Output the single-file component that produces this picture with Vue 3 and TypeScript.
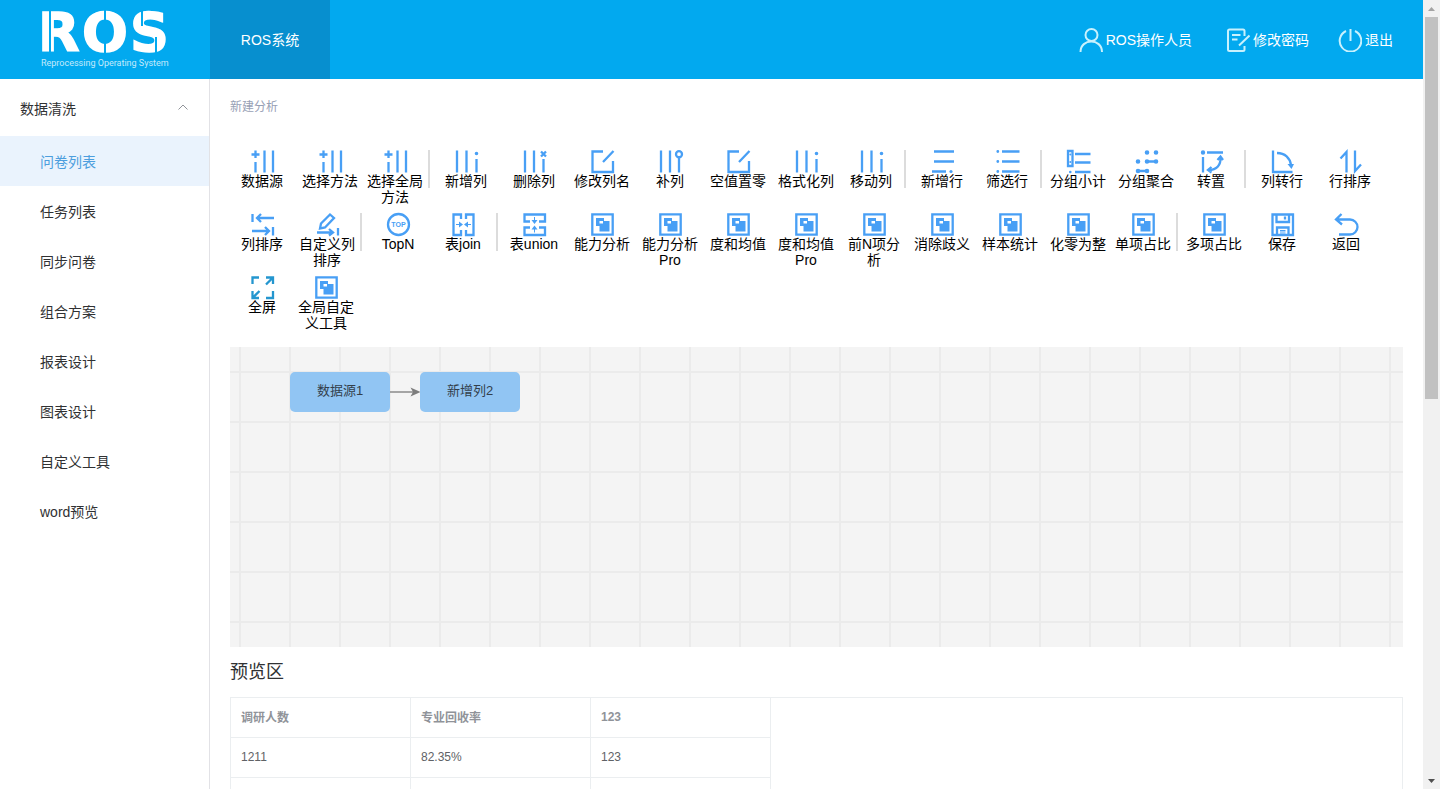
<script setup lang="ts">
interface Glyph {
  stroke?: string
  fill?: string
  knockout?: string
  text?: string
}

interface Tool {
  label: string
  icon: string
  end?: boolean
  last?: boolean
}

const dot = (x: number, y: number, r = 1.8): string =>
  `M${x - r} ${y}a${r} ${r} 0 1 0 ${2 * r} 0a${r} ${r} 0 1 0 ${-2 * r} 0z`

const glyphs: Record<string, Glyph> = {
  source: { stroke: 'M4.5 .5v7.500M.5 4.500h8M4.500 12v10.500M13.500 .5v22M22 .5v22' },
  columns: { stroke: 'M2 .5v22M11.500 .5v22M21.500 9v13.500', fill: dot(21.5, 3.5) },
  removeColumn: { stroke: 'M2 .5v22M11 .5v22M20.500 9v13.500M18 1.500l5 5M23 1.500l-5 5' },
  edit: { stroke: 'M12 1.500H1.500v20.500h20.500V11M22.500 1L12 12' },
  fillColumn: { stroke: 'M2 .5v22M11 .5v22M20 8v14.500M17 4.200a3 3 0 1 0 6 0a3 3 0 1 0 -6 0z' },
  addRow: { stroke: 'M3 1.500h20M3 11.500h20M1 21.500h14', fill: dot(20, 21.5, 1.6) },
  filterRow: { stroke: 'M6 1.500h17.500M6 11.500h17.500M6 21.500h17.500', fill: dot(1.8, 1.5, 1.4) + dot(1.8, 11.5, 1.4) + dot(1.8, 21.5, 1.4) },
  subtotal: { stroke: 'M1 1h4.500v15h-4.500zM8 4h15.500M8 12.500h15.500M8 22h15.500', fill: dot(3.3, 4.5, 1) + dot(3.3, 12, 1) + dot(3.3, 22, 1.3) },
  aggregate: { stroke: 'M12 11.500h9M3 21h9', fill: dot(12, 2.5, 2.3) + dot(21, 2.5, 2.3) + dot(3, 11.5, 2.3) + dot(12, 11.5, 2.3) + dot(21, 11.5, 2.3) + dot(3, 21, 2.3) + dot(12, 21, 2.3) },
  transpose: { stroke: 'M7 2.500h16M3 7v15.500M20.500 7C21 15 17 20 8.500 20M17.500 10l3-3.500l2.500 3.500M11.500 17l-3.500 3l3.500 2.500', fill: dot(3, 2.5, 2.2) },
  toRow: { stroke: 'M2 .5v21.500h19.500M6 3C14 3 19 8 20 15', fill: 'M16.500 14h6.500l-2.500 5z' },
  sortRow: { stroke: 'M7.500 22.500V2L1.500 8.500M16 .5v20.500l6-6.500' },
  sortColumn: { stroke: 'M1.500 1v8M6 5h17M10 1L6 5l4 4M22 14v8.500M1 18h17M14 14l4 4l-4 4' },
  customSort: { stroke: 'M5 10.500L14 1.500l4 3.500L9 14.500l-5 1zM1 19.500h16M13 16l4 3.500l-4 3M22 15v7.500' },
  top: { stroke: 'M1 11.500a10.500 10.500 0 1 0 21 0a10.500 10.500 0 1 0 -21 0z', text: 'TOP' },
  join: { stroke: 'M9 6V1.500H1.500v20.500H9V17M14 6V1.500h7.500v20.500H14V17', fill: 'M4 11h3V8.500l4 3l-4 3V12H4zM19 11h-3V8.500l-4 3l4 3V12h3z' },
  union: { stroke: 'M7 8.500H1.500V1.500h20.500v7H16M7 14.500H1.500v7.500h20.500v-7.500H16', fill: 'M11 4h1v3h2.500l-3 4l-3-4H11zM11 19.500h1v-3h2.500l-3-4l-3 4H11z' },
  tool: { stroke: 'M1.300 1.300h20.400v20.400h-20.400z', fill: 'M5 5h8v3h5.500v10.500h-10v-5.500H5z', knockout: 'M8.500 8h3.500v2.500h-3.500z' },
  save: { stroke: 'M1.500 1.500h20.500v20.500h-20.500zM5.500 2v7h12.500V2M6 22v-7.500h11.500V22M14 3.500v3', fill: 'M9 17h5.500v1.500H9zM9 19.500h5.500v1H9z' },
  back: { stroke: 'M6.500 1L1 6.500l6 5M1.500 6.500h13.500a7.500 7.500 0 0 1 0 15H4' },
  full: { stroke: 'M1.500 8V1.500H8M15 1.500h7v6.500M22 1.500L15 8.500M22 15v7h-7M8 22H1.500V15M1.500 22L8.500 15' },
}

const tools: Tool[] = [
  { label: '数据源', icon: 'source' },
  { label: '选择方法', icon: 'source' },
  { label: '选择全局方法', icon: 'source', end: true },
  { label: '新增列', icon: 'columns' },
  { label: '删除列', icon: 'removeColumn' },
  { label: '修改列名', icon: 'edit' },
  { label: '补列', icon: 'fillColumn' },
  { label: '空值置零', icon: 'edit' },
  { label: '格式化列', icon: 'columns' },
  { label: '移动列', icon: 'columns', end: true },
  { label: '新增行', icon: 'addRow' },
  { label: '筛选行', icon: 'filterRow', end: true },
  { label: '分组小计', icon: 'subtotal' },
  { label: '分组聚合', icon: 'aggregate' },
  { label: '转置', icon: 'transpose', end: true },
  { label: '列转行', icon: 'toRow' },
  { label: '行排序', icon: 'sortRow' },
  { label: '列排序', icon: 'sortColumn' },
  { label: '自定义列排序', icon: 'customSort', end: true },
  { label: 'TopN', icon: 'top' },
  { label: '表join', icon: 'join', end: true },
  { label: '表union', icon: 'union' },
  { label: '能力分析', icon: 'tool' },
  { label: '能力分析Pro', icon: 'tool' },
  { label: '度和均值', icon: 'tool' },
  { label: '度和均值Pro', icon: 'tool' },
  { label: '前N项分析', icon: 'tool' },
  { label: '消除歧义', icon: 'tool' },
  { label: '样本统计', icon: 'tool' },
  { label: '化零为整', icon: 'tool' },
  { label: '单项占比', icon: 'tool', end: true },
  { label: '多项占比', icon: 'tool' },
  { label: '保存', icon: 'save' },
  { label: '返回', icon: 'back', last: true },
  { label: '全屏', icon: 'full' },
  { label: '全局自定义工具', icon: 'tool', last: true },
]

const menu: string[] = ['问卷列表', '任务列表', '同步问卷', '组合方案', '报表设计', '图表设计', '自定义工具', 'word预览']

const columns: string[] = ['调研人数', '专业回收率', '123']
const rows: string[][] = [
  ['1211', '82.35%', '123'],
  ['', '', ''],
]
</script>

<template>
  <div class="window">
    <div class="page">
      <header class="topbar">
        <a class="brand" href="#">
          <svg width="210" height="79" viewBox="0 0 210 79" role="img" aria-label="ROS Reprocessing Operating System">
            <text class="brand-name" x="38 82 130" y="51">ROS</text>
            <path class="brand-cut" d="M50 10v44M105 10v14M105 39v15M142 10v16M156 37v17" />
            <text class="brand-sub" x="41" y="66">Reprocessing Operating System</text>
          </svg>
        </a>
        <nav class="systems"><a class="system" href="#">ROS系统</a></nav>
        <div class="actions">
          <button class="action account" type="button">
            <svg width="24" height="24" viewBox="0 0 24 24"><circle cx="12.500" cy="7" r="6" /><path d="M1.500 24c0-14 21.500-14 21.500 0" /></svg>
            <span>ROS操作人员</span>
          </button>
          <button class="action" type="button">
            <svg width="24" height="24" viewBox="0 0 24 24"><path d="M18.500 8V3q0-1.500-1.500-1.500H3.500Q2 1.500 2 3v18.500Q2 23 3.500 23H17q1.500 0 1.500-1.500V18M6 7h8.500M6 11.500h5.500M23.500 7.500L13 17.500" /></svg>
            <span>修改密码</span>
          </button>
          <button class="action" type="button">
            <svg width="24" height="24" viewBox="0 0 24 24"><path d="M12.500 1v12M8 3a10.800 10.800 0 1 0 9 0" /></svg>
            <span>退出</span>
          </button>
        </div>
      </header>

      <div class="body">
        <aside class="sidebar">
          <button class="group" type="button">
            <span>数据清洗</span>
            <svg width="12" height="12" viewBox="0 0 12 12"><path d="M1.500 7.500L6 3l4.500 4.500" /></svg>
          </button>
          <a v-for="(item, i) in menu" :key="item" href="#" class="entry" :class="{ active: i === 0 }">{{ item }}</a>
        </aside>

        <main class="content">
          <div class="crumb">新建分析</div>

          <div class="toolbar">
            <button v-for="tool in tools" :key="tool.label" type="button" class="tool" :class="{ end: tool.end, last: tool.last, deep: tool.icon === 'full' }">
              <svg width="23" height="23" viewBox="0 0 23 23">
                <path v-if="glyphs[tool.icon].stroke" class="line" :d="glyphs[tool.icon].stroke" />
                <path v-if="glyphs[tool.icon].fill" class="solid" :d="glyphs[tool.icon].fill" />
                <path v-if="glyphs[tool.icon].knockout" class="hole" :d="glyphs[tool.icon].knockout" />
                <text v-if="glyphs[tool.icon].text" class="badge" x="11.500" y="14">{{ glyphs[tool.icon].text }}</text>
              </svg>
              <span class="label">{{ tool.label }}</span>
            </button>
          </div>

          <section class="canvas">
            <div class="node first">数据源1</div>
            <svg class="edge" width="30" height="12" viewBox="0 0 30 12"><path class="shaft" d="M0 6h24" /><path class="head" d="M20.500 1.500L30.500 6l-10 4.500l2.500-4.500z" /></svg>
            <div class="node second">新增列2</div>
          </section>

          <h2 class="heading">预览区</h2>
          <div class="preview">
            <table>
              <thead>
                <tr><th v-for="c in columns" :key="c" scope="col">{{ c }}</th></tr>
              </thead>
              <tbody>
                <tr v-for="(r, i) in rows" :key="i"><td v-for="(v, j) in r" :key="j">{{ v }}</td></tr>
              </tbody>
            </table>
          </div>
        </main>
      </div>
    </div>

    <div class="scrollbar">
      <svg width="17" height="17" viewBox="0 0 17 17"><path class="faint" d="M5 11l3.500-4l3.500 4z" /></svg>
      <div class="track"><div class="thumb"></div></div>
      <svg width="17" height="17" viewBox="0 0 17 17"><path class="dark" d="M5 7l3.500 4l3.500-4z" /></svg>
    </div>
  </div>
</template>

<style>
body {
  margin: 0;
  overflow: hidden;
}
</style>

<style scoped>
.window {
  display: flex;
  height: 100vh;
  overflow: hidden;
  font-family: "Liberation Sans", "Noto Sans CJK SC", sans-serif;
  font-size: 14px;
  color: #303133;
  background: #fff;
}
button {
  margin: 0;
  padding: 0;
  border: 0;
  background: none;
  font: inherit;
  color: inherit;
  cursor: pointer;
}
a {
  color: inherit;
  text-decoration: none;
}
.page {
  flex: 1;
  min-width: 0;
  display: flex;
  flex-direction: column;
}
.topbar {
  flex: none;
  display: flex;
  height: 79px;
  background: #02a9ef;
  color: #fff;
}
.brand {
  width: 210px;
}
.brand svg {
  display: block;
}
.brand-name {
  font-family: "DejaVu Sans", sans-serif;
  font-size: 54px;
  font-weight: 700;
  fill: #fff;
  stroke: #fff;
  stroke-width: 1.5;
}
.brand-cut {
  stroke: #02a9ef;
  stroke-width: 2;
}
.brand-sub {
  font-family: "Roboto", "Liberation Sans", sans-serif;
  font-size: 9px;
  fill: #c4eafb;
}
.systems {
  display: flex;
}
.system {
  display: flex;
  align-items: center;
  justify-content: center;
  width: 120px;
  box-sizing: border-box;
  padding-bottom: 1px;
  background: #078fcf;
}
.actions {
  display: flex;
  align-items: center;
  gap: 29px;
  margin-left: auto;
  padding: 0 30px 0 0;
}
.action {
  display: flex;
  align-items: center;
  gap: 3px;
}
.account {
  padding-right: 5px;
}
.action span {
  padding-bottom: 1px;
}
.action svg {
  fill: none;
  stroke: #c8f1fd;
  stroke-width: 2;
}
.body {
  flex: 1;
  min-height: 0;
  display: flex;
}
.sidebar {
  box-sizing: border-box;
  width: 210px;
  flex: none;
  border-right: 1px solid #e2e2e6;
}
.group {
  display: flex;
  align-items: center;
  justify-content: space-between;
  width: 100%;
  height: 57px;
  padding: 0 20px;
}
.group svg {
  fill: none;
  stroke: #909399;
}
.entry {
  display: flex;
  align-items: center;
  height: 50px;
  padding-left: 40px;
}
.entry.active {
  background: #eaf3fd;
  color: #4c9ede;
}
.content {
  flex: 1;
  min-width: 0;
  display: flex;
  flex-direction: column;
  padding: 19px 20px 0;
}
.crumb {
  font-size: 12px;
  line-height: 18px;
  color: #97a0b5;
}
.toolbar {
  display: flex;
  flex-wrap: wrap;
  row-gap: 8px;
  margin: 34px -2px 16px;
  color: #000;
}
.tool {
  box-sizing: border-box;
  display: flex;
  flex-direction: column;
  align-items: center;
  width: 68px;
  height: 55px;
  padding: 0 2px;
  position: relative;
}
.tool.end {
  padding: 0 6px 0 0;
}
.tool.last {
  padding: 0 8px 0 0;
}
.tool.end::after {
  content: "";
  position: absolute;
  right: 2px;
  top: 0;
  width: 2px;
  height: 38px;
  background: #dcdcdc;
}
.tool svg {
  flex: none;
  overflow: visible;
  color: #489ff5;
}
.tool.deep svg {
  color: #2496cf;
}
.line {
  fill: none;
  stroke: currentColor;
  stroke-width: 2.3;
}
.solid {
  fill: currentColor;
}
.hole {
  fill: #fff;
}
.badge {
  font-size: 7px;
  font-weight: 700;
  text-anchor: middle;
  fill: currentColor;
}
.label {
  line-height: 16px;
  text-align: center;
}
.canvas {
  position: relative;
  flex: none;
  height: 300px;
  background-color: #f4f4f4;
  background-image: linear-gradient(#ebebeb 2px, transparent 2px), linear-gradient(90deg, #ebebeb 2px, transparent 2px);
  background-size: 50px 50px;
  background-position: 0 24px, 9px 0;
}
.node {
  position: absolute;
  top: 25px;
  width: 100px;
  height: 40px;
  line-height: 38px;
  border-radius: 5px;
  background: #91c5f3;
  color: #333f4b;
  font-size: 13px;
  text-align: center;
}
.node.first {
  left: 60px;
}
.node.second {
  left: 190px;
}
.edge {
  position: absolute;
  left: 160px;
  top: 39px;
}
.shaft {
  stroke: #8b8b8b;
  stroke-width: 1.5;
}
.head {
  fill: #7d7d7d;
}
.heading {
  margin: 12px 0;
  font-size: 18px;
  font-weight: 400;
  line-height: 26px;
}
.preview {
  flex: 1;
  border: 1px solid #ebeef0;
  border-bottom: 0;
}
table {
  border-collapse: separate;
  border-spacing: 0;
  table-layout: fixed;
  width: 540px;
  font-size: 12px;
}
th,
td {
  box-sizing: border-box;
  height: 40px;
  padding: 0 10px 2px;
  border-right: 1px solid #ebeef0;
  border-bottom: 1px solid #ebeef0;
  text-align: left;
  color: #606266;
}
th {
  color: #909399;
}
.scrollbar {
  flex: none;
  display: flex;
  flex-direction: column;
  width: 17px;
  background: #f1f1f1;
}
.track {
  flex: 1;
  padding: 0 2px;
}
.thumb {
  height: 50.6%;
  background: #c1c1c1;
}
.faint {
  fill: #a3a3a3;
}
.dark {
  fill: #505050;
}
</style>
